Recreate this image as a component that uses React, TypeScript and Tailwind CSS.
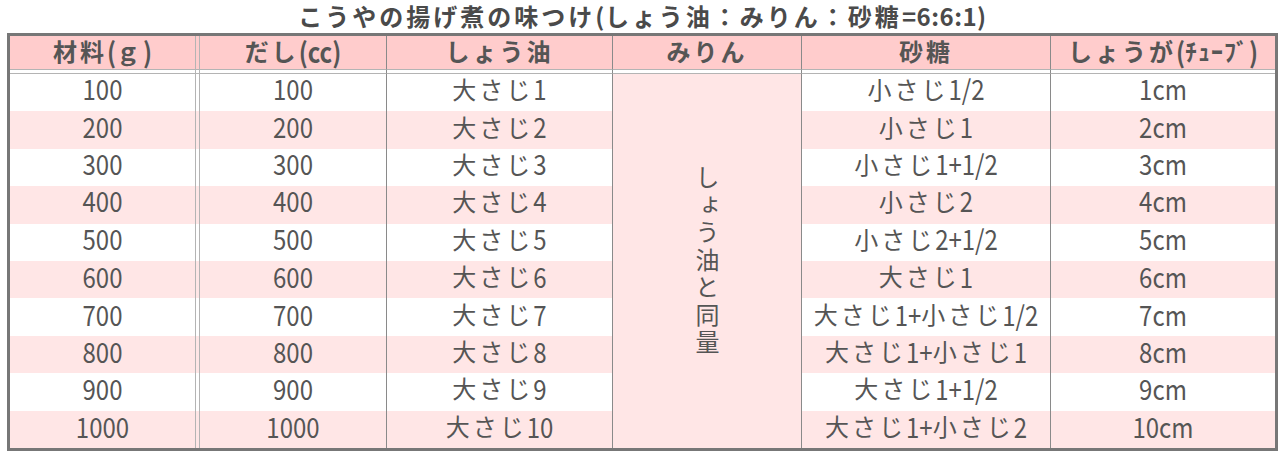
import React from "react"

const rows = [
  { g: "100", dashi: "100", shoyu: "大さじ1", sugar: "小さじ1/2", ginger: "1cm" },
  { g: "200", dashi: "200", shoyu: "大さじ2", sugar: "小さじ1", ginger: "2cm" },
  { g: "300", dashi: "300", shoyu: "大さじ3", sugar: "小さじ1+1/2", ginger: "3cm" },
  { g: "400", dashi: "400", shoyu: "大さじ4", sugar: "小さじ2", ginger: "4cm" },
  { g: "500", dashi: "500", shoyu: "大さじ5", sugar: "小さじ2+1/2", ginger: "5cm" },
  { g: "600", dashi: "600", shoyu: "大さじ6", sugar: "大さじ1", ginger: "6cm" },
  { g: "700", dashi: "700", shoyu: "大さじ7", sugar: "大さじ1+小さじ1/2", ginger: "7cm" },
  { g: "800", dashi: "800", shoyu: "大さじ8", sugar: "大さじ1+小さじ1", ginger: "8cm" },
  { g: "900", dashi: "900", shoyu: "大さじ9", sugar: "大さじ1+1/2", ginger: "9cm" },
  { g: "1000", dashi: "1000", shoyu: "大さじ10", sugar: "大さじ1+小さじ2", ginger: "10cm" },
]

const jp = { fontFamily: '"Noto Sans CJK JP", "Noto Sans", sans-serif' }

// the original uses a fixed-pitch gothic: wide-set kana, tall narrow digits
function Mixed({ text, tall = true }: { text: string; tall?: boolean }) {
  const parts = text.split(/([\x20-\x7e]+|[\uff61-\uff9f]+)/).filter(Boolean)
  return (
    <>
      {parts.map((p, i) =>
        /^[\x20-\x7e]+$/.test(p) ? (
          <span key={i} className={tall ? "inline-block leading-none scale-y-[1.15]" : "tracking-[0.5px]"}>{p}</span>
        ) : /^[\uff61-\uff9f]+$/.test(p) ? (
          <span key={i} className="tracking-[1px]">{p}</span>
        ) : (
          <span key={i} className="tracking-[3px]">{p}</span>
        )
      )}
    </>
  )
}

// light = the double lines around the header / first column, dark = normal column lines
function Cell({ text, bg, line, lift = "pb-[7px]" }: { text?: string; bg: string; line?: "light" | "dark"; lift?: string }) {
  const border = line === "light" ? "border-r border-[#b4b4b4]" : line === "dark" ? "border-r border-[#8a8a8a]" : ""
  return (
    <div className={`flex items-center justify-center whitespace-nowrap leading-none ${bg} ${border}`}>
      {text && <span className={lift}><Mixed text={text} /></span>}
    </div>
  )
}

const head = "bg-[#ffcccc] border-b border-b-[#b4b4b4]"
const gap = "bg-white border-b border-b-[#b4b4b4]"

export default function App() {
  return (
    <div className="w-[1285px] h-[457px] bg-white text-[#555555]" style={jp}>
      <h1 className="h-[33px] text-center text-[24px] font-bold text-[#4a4a4a] leading-[31px] whitespace-nowrap">
        <Mixed text="こうやの揚げ煮の味つけ(しょう油：みりん：砂糖=6:6:1)" tall={false} />
      </h1>

      <div className="mx-[7px] w-[1271px] border-[3px] border-[#777777]">
        <div className="grid grid-cols-[186px_4px_187px_226px_189px_249px_224px] grid-rows-[34px_4px_repeat(10,37.4px)] text-[24px]">
          {/* header */}
          <div className="contents font-bold">
            <Cell bg={head} line="light" lift="pb-[3px]" text="材料(ｇ)" />
            <Cell bg={head} line="light" />
            <Cell bg={head} line="dark" lift="pb-[3px]" text="だし(cc)" />
            <Cell bg={head} line="dark" lift="pb-[3px]" text="しょう油" />
            <Cell bg={head} line="dark" lift="pb-[3px]" text="みりん" />
            <Cell bg={head} line="dark" lift="pb-[3px]" text="砂糖" />
            <Cell bg={head} lift="pb-[3px]" text="しょうが(ﾁｭｰﾌﾞ)" />
          </div>

          {/* gap between the double line */}
          <Cell bg={gap} line="light" />
          <Cell bg={gap} line="light" />
          <Cell bg={gap} line="dark" />
          <Cell bg={gap} line="dark" />
          <Cell bg={gap} line="dark" />
          <Cell bg={gap} line="dark" />
          <Cell bg={gap} />

          {/* merged mirin column */}
          <div className="col-start-5 row-start-3 row-span-10 flex items-center justify-center bg-[#ffe6e6] border-r border-[#8a8a8a]">
            <span className="text-[24px] leading-none tracking-[3.5px] [writing-mode:vertical-rl]">しょう油と同量</span>
          </div>

          {rows.map((r, i) => {
            const bg = i % 2 === 1 ? "bg-[#ffe6e6]" : "bg-white"
            return (
              <div key={r.g} className="contents">
                <Cell bg={bg} line="light" text={r.g} />
                <Cell bg={bg} line="light" />
                <Cell bg={bg} line="dark" text={r.dashi} />
                <Cell bg={bg} line="dark" text={r.shoyu} />
                <Cell bg={bg} line="dark" text={r.sugar} />
                <Cell bg={bg} text={r.ginger} />
              </div>
            )
          })}
        </div>
      </div>
    </div>
  )
}
